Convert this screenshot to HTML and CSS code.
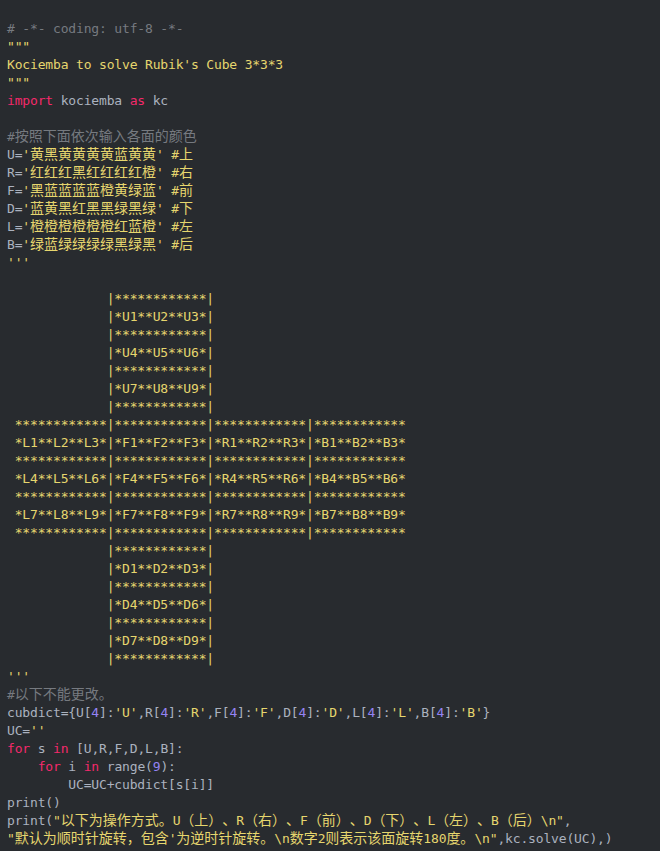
FILE: index.html
```
<!DOCTYPE html>
<html lang="zh">
<head>
<meta charset="utf-8">
<title>Kociemba</title>
<link rel="stylesheet" href="styles.css">
</head>
<body>
<pre class="code"><span class="cm"># -*- coding: utf-8 -*-</span>
<span class="st">"""</span>
<span class="st">Kociemba to solve Rubik's Cube 3*3*3</span>
<span class="st">"""</span>
<span class="kw">import</span> kociemba <span class="kw">as</span> kc

<span class="cm">#<span class="c">按照下面依次输入各面的颜色</span></span>
U=<span class="st">'<span class="c">黄黑黄黄黄黄蓝黄黄</span>' #<span class="c">上</span></span>
R=<span class="st">'<span class="c">红红红黑红红红红橙</span>' #<span class="c">右</span></span>
F=<span class="st">'<span class="c">黑蓝蓝蓝蓝橙黄绿蓝</span>' #<span class="c">前</span></span>
D=<span class="st">'<span class="c">蓝黄黑红黑黑绿黑绿</span>' #<span class="c">下</span></span>
L=<span class="st">'<span class="c">橙橙橙橙橙橙红蓝橙</span>' #<span class="c">左</span></span>
B=<span class="st">'<span class="c">绿蓝绿绿绿绿黑绿黑</span>' #<span class="c">后</span></span>
<span class="st">'''

             |************|
             |*U1**U2**U3*|
             |************|
             |*U4**U5**U6*|
             |************|
             |*U7**U8**U9*|
             |************|
 ************|************|************|************
 *L1**L2**L3*|*F1**F2**F3*|*R1**R2**R3*|*B1**B2**B3*
 ************|************|************|************
 *L4**L5**L6*|*F4**F5**F6*|*R4**R5**R6*|*B4**B5**B6*
 ************|************|************|************
 *L7**L8**L9*|*F7**F8**F9*|*R7**R8**R9*|*B7**B8**B9*
 ************|************|************|************
             |************|
             |*D1**D2**D3*|
             |************|
             |*D4**D5**D6*|
             |************|
             |*D7**D8**D9*|
             |************|
'''</span>
<span class="cm">#<span class="c">以下不能更改。</span></span>
cubdict={U[<span class="nu">4</span>]:<span class="st">'U'</span>,R[<span class="nu">4</span>]:<span class="st">'R'</span>,F[<span class="nu">4</span>]:<span class="st">'F'</span>,D[<span class="nu">4</span>]:<span class="st">'D'</span>,L[<span class="nu">4</span>]:<span class="st">'L'</span>,B[<span class="nu">4</span>]:<span class="st">'B'</span>}
UC=<span class="st">''</span>
<span class="kw">for</span> s <span class="kw">in</span> [U,R,F,D,L,B]:
    <span class="kw">for</span> i <span class="kw">in</span> range(<span class="nu">9</span>):
        UC=UC+cubdict[s[i]]
print()
print(<span class="st">"<span class="c">以下为操作方式。</span>U<span class="c">（上）、</span>R<span class="c">（右）、</span>F<span class="c">（前）、</span>D<span class="c">（下）、</span>L<span class="c">（左）、</span>B<span class="c">（后）</span>\n"</span>,
<span class="st">"<span class="c">默认为顺时针旋转，包含</span>'<span class="c">为逆时针旋转。</span>\n<span class="c">数字</span>2<span class="c">则表示该面旋转</span>180<span class="c">度。</span>\n"</span>,kc.solve(UC),)</pre>
</body>
</html>
```

FILE: styles.css
```
html, body {
  margin: 0;
  padding: 0;
  background: #282b2f;
}

.code {
  margin: 0;
  padding: 20px 7px 0;
  font-family: "DejaVu Sans Mono", "Noto Sans CJK SC", monospace;
  font-size: 13px;
  line-height: 18px;
  letter-spacing: -0.16px;
  color: #abb2bf;
  white-space: pre;
}

.c {
  font-family: "Noto Sans CJK SC", sans-serif;
  font-size: 14px;
  line-height: 1;
  letter-spacing: 0;
  text-spacing-trim: space-all;
  font-feature-settings: "halt" 0, "chws" 0;
}

.cm { color: #767a80; }
.st { color: #e6d66e; }
.kw { color: #f4296b; }
.nu { color: #9583f4; }
```
